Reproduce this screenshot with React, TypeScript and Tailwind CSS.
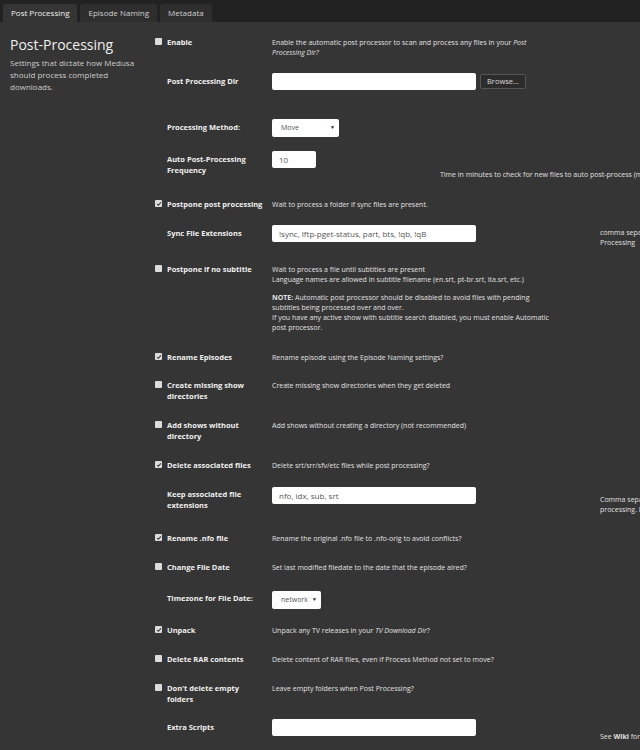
import React from 'react';

type CheckProps = { checked: boolean };

const CheckBox = ({ checked }: CheckProps) => (
  <span className="flex h-[7px] w-[7px] items-center justify-center rounded-[1px] bg-[#dcdcdc]">
    {checked && (
      <svg viewBox="0 0 8 8" className="h-[6px] w-[6px]">
        <path d="M1.5 4.2 L3.2 5.8 L6.5 1.8" fill="none" stroke="#333" strokeWidth="1.4" />
      </svg>
    )}
  </span>
);

type RowProps = {
  check?: boolean;
  label: React.ReactNode;
  labelPad?: string;
  height: string;
  children?: React.ReactNode;
};

const FieldRow = ({ check, label, labelPad = '', height, children }: RowProps) => (
  <div className={`flex items-start ${height}`}>
    <div className="w-[12px] shrink-0 pt-[1px]">{check !== undefined && <CheckBox checked={check} />}</div>
    <div className={`w-[105px] shrink-0 pr-[7px] text-[7.5px] font-bold leading-[11px] text-[#f0f0f0] ${labelPad}`}>
      {label}
    </div>
    <div className="min-w-0 flex-1">{children}</div>
  </div>
);

const Desc = ({ children }: { children: React.ReactNode }) => (
  <p className="whitespace-nowrap pt-[0.5px] text-[7px] leading-[10px] text-[#e0e0e0]">{children}</p>
);

const TextInput = ({ value = '', width = 'w-[204px]' }: { value?: string; width?: string }) => (
  <div className={`flex h-[17px] ${width} shrink-0 items-center rounded-[2px] bg-white px-[7px] text-[8px] text-[#555]`}>
    {value}
  </div>
);

const Select = ({ value, width }: { value: string; width: string }) => (
  <div className={`flex h-[18px] ${width} items-center justify-between rounded-[2px] bg-white pl-[9px] pr-[4px] text-[7px] text-[#555]`}>
    <span>{value}</span>
    <span className="text-[5px] text-[#222]">▼</span>
  </div>
);

const Help = ({ children, top }: { children: React.ReactNode; top: string }) => (
  <div className={`ml-[124px] whitespace-nowrap text-[7px] leading-[10px] text-[#e0e0e0] ${top}`}>{children}</div>
);

const Tab = ({ label, active }: { label: string; active?: boolean }) => (
  <div
    className={`flex h-[18px] items-center rounded-t-[3px] px-[8px] text-[8px] ${
      active ? 'bg-[#353535] text-[#f0f0f0]' : 'bg-[#2e2e2e] text-[#d0d0d0]'
    }`}
  >
    {label}
  </div>
);

const App = () => {
  return (
    <div className="min-h-screen w-full overflow-hidden bg-[#222222] font-['Open_Sans','Liberation_Sans',sans-serif]">
      {/* tab strip */}
      <div className="flex gap-[3px] pl-[3px] pt-[4px]">
        <Tab label="Post Processing" active />
        <Tab label="Episode Naming" />
        <Tab label="Metadata" />
      </div>

      <div className="flex min-h-[728px] bg-[#353535]">
        {/* section intro */}
        <div className="w-[155px] shrink-0 pl-[10px] pt-[13px]">
          <h2 className="text-[14px] leading-[19px] text-[#f0f0f0]">Post-Processing</h2>
          <p className="mt-[3px] text-[8px] leading-[12px] text-[#cccccc]">
            Settings that dictate how Medusa
            <br />
            should process completed
            <br />
            downloads.
          </p>
        </div>

        {/* settings fields */}
        <div className="min-w-0 flex-1 pt-[15px]">
          <FieldRow check={false} label="Enable" height="h-[36px]">
            <Desc>
              Enable the automatic post processor to scan and process any files in your <i>Post</i>
              <br />
              <i>Processing Dir?</i>
            </Desc>
          </FieldRow>

          <FieldRow label="Post Processing Dir" labelPad="pt-[3px]" height="h-[46px]">
            <div className="flex items-start gap-[4px]">
              <TextInput />
              <button className="mt-[1px] h-[15px] rounded-[2px] border border-[#555] bg-[#2c2c2c] px-[6px] text-[7.5px] leading-none text-[#dddddd]">
                Browse...
              </button>
            </div>
          </FieldRow>

          <FieldRow label="Processing Method:" labelPad="pt-[3px]" height="h-[32px]">
            <Select value="Move" width="w-[67px]" />
          </FieldRow>

          <FieldRow
            label={
              <>
                Auto Post-Processing
                <br />
                Frequency
              </>
            }
            labelPad="pt-[3px]"
            height="h-[48px]"
          >
            <TextInput value="10" width="w-[44px]" />
            <p className="ml-[168px] mt-[2px] whitespace-nowrap text-[7px] leading-[10px] text-[#e0e0e0]">
              Time in minutes to check for new files to auto post-process (min 10)
            </p>
          </FieldRow>

          <FieldRow check label="Postpone post processing" height="h-[26px]">
            <Desc>Wait to process a folder if sync files are present.</Desc>
          </FieldRow>

          <FieldRow label="Sync File Extensions" labelPad="pt-[3px]" height="h-[39px]">
            <div className="flex items-start">
              <TextInput value="!sync, lftp-pget-status, part, bts, !qb, !qB" />
              <Help top="mt-[3px]">
                comma separated list of extensions or filename globs Medusa ignores when Post
                <br />
                Processing
              </Help>
            </div>
          </FieldRow>

          <FieldRow check={false} label="Postpone if no subtitle" height="h-[88px]">
            <Desc>
              Wait to process a file until subtitles are present
              <br />
              Language names are allowed in subtitle filename (en.srt, pt-br.srt, ita.srt, etc.)
            </Desc>
            <div className="mt-[8px]">
              <Desc>
                <b>NOTE:</b> Automatic post processor should be disabled to avoid files with pending
                <br />
                subtitles being processed over and over.
                <br />
                If you have any active show with subtitle search disabled, you must enable Automatic
                <br />
                post processor.
              </Desc>
            </div>
          </FieldRow>

          <FieldRow check label="Rename Episodes" height="h-[28px]">
            <Desc>Rename episode using the Episode Naming settings?</Desc>
          </FieldRow>

          <FieldRow check={false} label="Create missing show directories" height="h-[40px]">
            <Desc>Create missing show directories when they get deleted</Desc>
          </FieldRow>

          <FieldRow check={false} label="Add shows without directory" height="h-[40px]">
            <Desc>Add shows without creating a directory (not recommended)</Desc>
          </FieldRow>

          <FieldRow check label="Delete associated files" height="h-[27px]">
            <Desc>Delete srt/srr/sfv/etc files while post processing?</Desc>
          </FieldRow>

          <FieldRow label="Keep associated file extensions" labelPad="pt-[2px]" height="h-[46px]">
            <div className="flex items-start">
              <TextInput value="nfo, idx, sub, srt" />
              <Help top="mt-[8px]">
                Comma separated list of associated file extensions Medusa should keep while post
                <br />
                processing. Leaving it empty means all associated files will be deleted
              </Help>
            </div>
          </FieldRow>

          <FieldRow check label="Rename .nfo file" height="h-[29px]">
            <Desc>Rename the original .nfo file to .nfo-orig to avoid conflicts?</Desc>
          </FieldRow>

          <FieldRow check={false} label="Change File Date" height="h-[29px]">
            <Desc>Set last modified filedate to the date that the episode aired?</Desc>
          </FieldRow>

          <FieldRow label="Timezone for File Date:" labelPad="pt-[2px]" height="h-[34px]">
            <Select value="network" width="w-[49px]" />
          </FieldRow>

          <FieldRow check label="Unpack" height="h-[29px]">
            <Desc>
              Unpack any TV releases in your <i>TV Download Dir</i>?
            </Desc>
          </FieldRow>

          <FieldRow check={false} label="Delete RAR contents" height="h-[29px]">
            <Desc>Delete content of RAR files, even if Process Method not set to move?</Desc>
          </FieldRow>

          <FieldRow check={false} label="Don't delete empty folders" height="h-[36px]">
            <Desc>Leave empty folders when Post Processing?</Desc>
          </FieldRow>

          <FieldRow label="Extra Scripts" labelPad="pt-[3px]" height="h-[30px]">
            <div className="flex items-start">
              <TextInput />
              <Help top="mt-[13px]">
                See <b>Wiki</b> for script arguments description and usage.
              </Help>
            </div>
          </FieldRow>
        </div>
      </div>
    </div>
  );
};

export default App;
